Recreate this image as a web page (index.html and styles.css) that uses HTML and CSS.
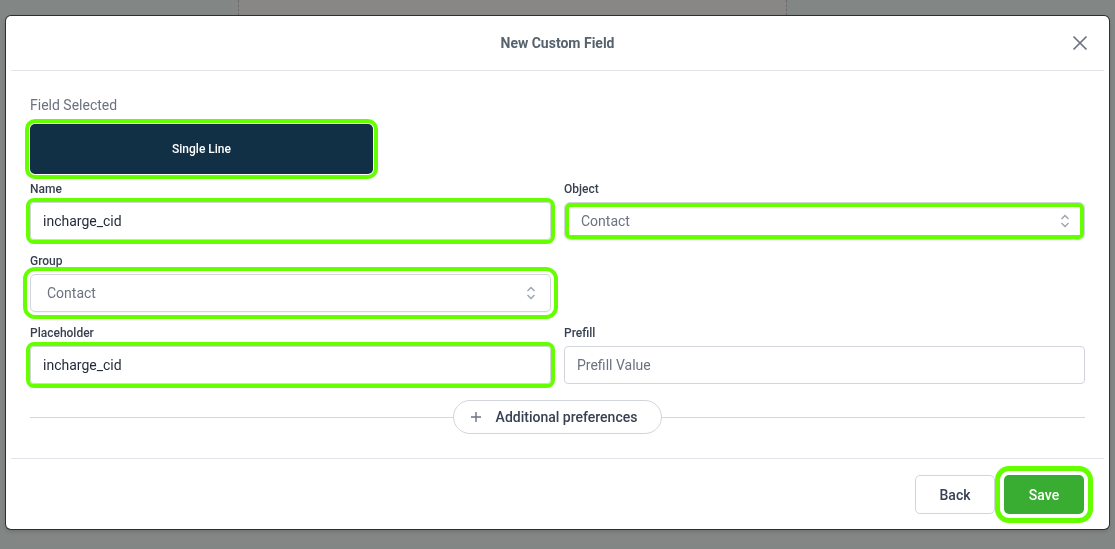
FILE: index.html
```html
<!DOCTYPE html>
<html lang="en">
<head>
  <meta charset="UTF-8">
  <title>New Custom Field</title>
  <link rel="stylesheet" href="styles.css">
</head>
<body>
  <div class="page">
    <div class="col col-left"></div>
    <div class="col col-mid"></div>
    <div class="col col-right"></div>
  </div>

  <div class="overlay">
    <div class="modal">
      <div class="modal-header">
        <span></span>
        <h3 class="modal-title">New Custom Field</h3>
        <button class="close-btn" aria-label="Close">
          <svg width="16" height="16" viewBox="0 0 16 16"><path d="M1.5 1.5 L14.5 14.5 M14.5 1.5 L1.5 14.5" stroke="#6b7280" stroke-width="1.7" fill="none"/></svg>
        </button>
      </div>

      <div class="modal-body">
        <div class="field-selected-label">Field Selected</div>
        <button class="field-type hl">Single Line</button>

        <div class="form-grid">
          <div class="form-group">
            <label>Name</label>
            <input type="text" class="text-input hl" value="incharge_cid">
          </div>
          <div class="form-group">
            <label>Object</label>
            <div class="select hl-inset">
              <span>Contact</span>
              <svg width="10" height="14" viewBox="0 0 10 14"><path d="M1.5 5 L5 1.5 L8.5 5 M1.5 9 L5 12.5 L8.5 9" stroke="#9ca3af" stroke-width="1.4" fill="none"/></svg>
            </div>
          </div>
          <div class="form-group">
            <label>Group</label>
            <div class="select hl-wide">
              <span>Contact</span>
              <svg width="10" height="14" viewBox="0 0 10 14"><path d="M1.5 5 L5 1.5 L8.5 5 M1.5 9 L5 12.5 L8.5 9" stroke="#9ca3af" stroke-width="1.4" fill="none"/></svg>
            </div>
          </div>
          <div class="form-group"></div>
          <div class="form-group">
            <label>Placeholder</label>
            <input type="text" class="text-input hl" value="incharge_cid">
          </div>
          <div class="form-group">
            <label>Prefill</label>
            <input type="text" class="text-input" placeholder="Prefill Value">
          </div>
        </div>

        <div class="divider-row">
          <button class="pill">
            <svg width="12" height="12" viewBox="0 0 12 12"><path d="M6 1 V11 M1 6 H11" stroke="#6b7280" stroke-width="1.4" fill="none"/></svg>
            Additional preferences
          </button>
        </div>
      </div>

      <div class="modal-footer">
        <button class="btn btn-back">Back</button>
        <button class="btn btn-save hl-save">Save</button>
      </div>
    </div>
  </div>
</body>
</html>
```

FILE: styles.css
```css
html, body {
  margin: 0;
  padding: 0;
  height: 100%;
  font-family: Roboto, 'Liberation Sans', Arial, sans-serif;
  background: #828685;
}

body {
  overflow: hidden;
}

/* strip of the page behind the modal, only the top shows */
.page {
  display: grid;
  grid-template-columns: 238px 549px 1fr;
  height: 16px;
}

.col-mid {
  background: #898786;
  border-left: 1px dashed #6c6c6c;
  border-right: 1px dashed #6c6c6c;
}

.overlay {
  position: fixed;
  inset: 0;
  padding: 16px 6px;
}

.modal {
  background: white;
  border-radius: 5px;
  box-shadow: 0 0 0 1px #27313b, 0 2px 4px rgba(0, 0, 0, 0.2);
}

.modal-header {
  display: grid;
  grid-template-columns: 1fr auto 1fr;
  align-items: center;
  height: 54px;
  margin: 0 5px;
  padding: 0 16px;
  border-bottom: 1px solid #e3e4ea;
}

.modal-title {
  margin: 0;
  font-size: 14px;
  font-weight: 700;
  color: #56626d;
}

.close-btn {
  justify-self: end;
  background: none;
  border: none;
  padding: 0;
  display: flex;
  cursor: pointer;
}

.modal-body {
  padding: 26px 24px 24px;
}

.field-selected-label {
  font-size: 14px;
  line-height: 17px;
  color: #6b7280;
}

.field-type {
  display: block;
  width: 343px;
  height: 50px;
  margin-top: 10px;
  background: #112f45;
  color: white;
  border: none;
  border-radius: 4px;
  font-family: inherit;
  font-size: 12px;
  font-weight: 500;
}

.form-grid {
  display: grid;
  grid-template-columns: 1fr 1fr;
  column-gap: 13px;
  row-gap: 14px;
  margin-top: 8px;
}

.form-group label {
  display: block;
  font-size: 12px;
  line-height: 14px;
  font-weight: 500;
  color: #374151;
  margin-bottom: 6px;
}

.text-input {
  display: block;
  width: 100%;
  height: 38px;
  box-sizing: border-box;
  padding: 0 12px;
  border: 1px solid #d1d5db;
  border-radius: 4px;
  font-family: inherit;
  font-size: 14px;
  color: #1f2937;
}

.text-input::placeholder {
  color: #6b7280;
}

.select {
  display: flex;
  align-items: center;
  justify-content: space-between;
  height: 38px;
  box-sizing: border-box;
  padding: 0 14px 0 16px;
  border: 1px solid #d1d5db;
  border-radius: 4px;
  box-shadow: 0 1px 2px rgba(0, 0, 0, 0.05);
  font-size: 14px;
  color: #6b7280;
}

/* green highlight rings */
.hl {
  outline: 4px solid #66ff00;
  outline-offset: 0;
}

.field-type.hl {
  outline-offset: 1px;
  border-radius: 5px;
}

.hl-inset {
  outline: 4px solid #66ff00;
  outline-offset: -5px;
  border-radius: 6px;
}

.hl-wide {
  outline: 4px solid #66ff00;
  outline-offset: 3px;
  border-radius: 5px;
}

.divider-row {
  display: flex;
  align-items: center;
  justify-content: center;
  margin-top: 16px;
  background: linear-gradient(#d4d6dc, #d4d6dc) center / 100% 1px no-repeat;
}

.pill {
  display: flex;
  align-items: center;
  gap: 14px;
  height: 34px;
  padding: 0 24px 0 16px;
  background: white;
  border: 1px solid #d1d5db;
  border-radius: 17px;
  font-family: inherit;
  font-size: 14px;
  font-weight: 500;
  color: #374151;
}

.modal-footer {
  display: flex;
  justify-content: flex-end;
  gap: 9px;
  margin: 0 5px;
  padding: 16px 20px 15px 0;
  border-top: 1px solid #e3e4ea;
}

.btn {
  width: 80px;
  height: 39px;
  border-radius: 5px;
  font-family: inherit;
  font-size: 14px;
  font-weight: 500;
  cursor: pointer;
}

.btn-back {
  background: white;
  border: 1px solid #d1d5db;
  color: #374151;
}

.btn-save {
  background: #38ad32;
  border: none;
  color: white;
}

.hl-save {
  outline: 5px solid #66ff00;
  outline-offset: 4px;
}
```
